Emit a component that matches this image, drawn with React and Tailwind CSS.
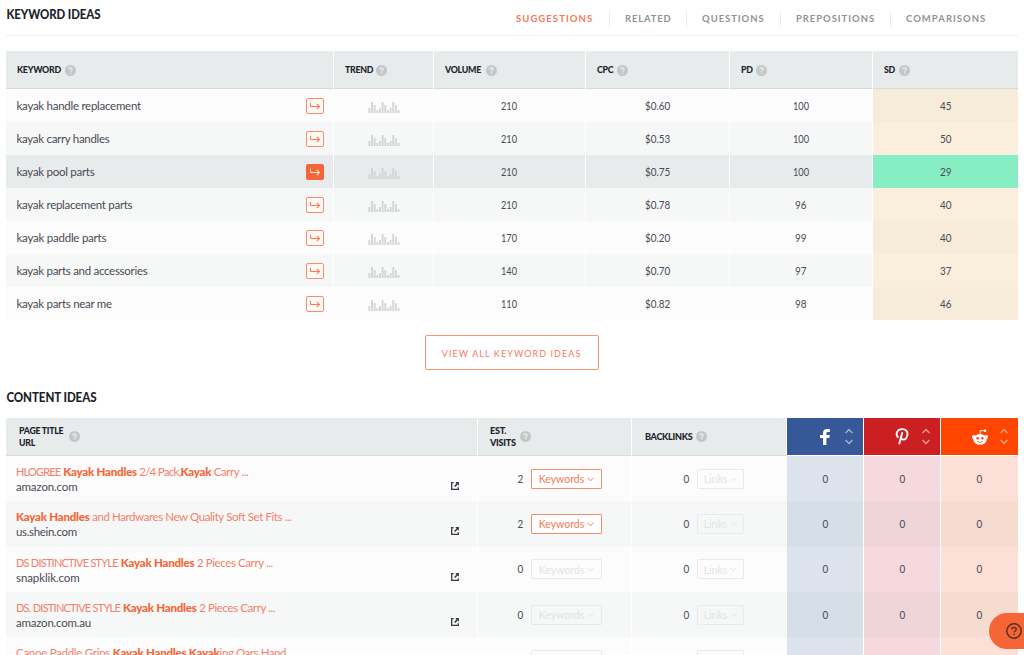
import React from "react";

const keywordRows = [
  { name: "kayak handle replacement", track: "tracking-[-0.27px]", volume: "210", cpc: "$0.60", pd: "100", sd: "45" },
  { name: "kayak carry handles", track: "tracking-[-0.3px]", volume: "210", cpc: "$0.53", pd: "100", sd: "50" },
  { name: "kayak pool parts", track: "tracking-[-0.28px]", volume: "210", cpc: "$0.75", pd: "100", sd: "29", active: true },
  { name: "kayak replacement parts", track: "tracking-[-0.29px]", volume: "210", cpc: "$0.78", pd: "96", sd: "40" },
  { name: "kayak paddle parts", track: "tracking-[-0.24px]", volume: "170", cpc: "$0.20", pd: "99", sd: "40" },
  { name: "kayak parts and accessories", track: "tracking-[-0.29px]", volume: "140", cpc: "$0.70", pd: "97", sd: "37" },
  { name: "kayak parts near me", track: "tracking-[-0.29px]", volume: "110", cpc: "$0.82", pd: "98", sd: "46" },
];

const contentRows = [
  {
    title: <><i className="text-[11px] tracking-[-0.82px]">HLOGREE</i> <b>Kayak Handles</b><i className="tracking-[-0.72px]"> 2/4 Pack,</i><b>Kayak</b><i className="tracking-[-0.45px]"> Carry ...</i></>,
    url: "amazon.com", track: "tracking-[-0.15px]", visits: "2",
  },
  {
    title: <><b>Kayak Handles</b><i className="tracking-[-0.41px]"> and Hardwares New Quality Soft Set Fits ...</i></>,
    url: "us.shein.com", track: "tracking-[-0.33px]", visits: "2",
  },
  {
    title: <><i className="text-[11px] tracking-[-0.78px]">DS DISTINCTIVE STYLE</i> <b>Kayak Handles</b><i className="tracking-[-0.4px]"> 2 Pieces Carry ...</i></>,
    url: "snapklik.com", track: "tracking-[-0.1px]", visits: "0",
  },
  {
    title: <><i className="text-[11px] tracking-[-0.76px]">DS. DISTINCTIVE STYLE</i> <b>Kayak Handles</b><i className="tracking-[-0.4px]"> 2 Pieces Carry ...</i></>,
    url: "amazon.com.au", track: "tracking-[-0.22px]", visits: "0",
  },
  {
    title: <><i className="tracking-[-0.28px]">Canoe Paddle Grips </i><b>Kayak Handles Kayak</b><i className="tracking-[-0.43px]">ing Oars Hand</i></>,
    url: "", track: "", visits: "0",
  },
];

const keywordGrid = "grid grid-cols-[327px_99px_151px_143px_142px_145px] gap-px";
const contentGrid = "grid grid-cols-[471px_153px_154px_76px_76px_77px] gap-px";

function Help({ className = "" }) {
  return (
    <svg viewBox="0 0 11 11" className={`h-[11px] w-[11px] shrink-0 ${className}`}>
      <circle cx="5.5" cy="5.5" r="5.5" fill="#c3c7c8" />
      <path d="M3.8 4.4c0-1 .7-1.6 1.7-1.6s1.7.6 1.7 1.4c0 1.1-1.5 1.1-1.5 2.2" fill="none" stroke="#eef0f0" strokeWidth="1.2" />
      <rect x="5" y="7.3" width="1.3" height="1.3" fill="#eef0f0" />
    </svg>
  );
}

function HeadCell({ label, width }) {
  return (
    <div className="flex items-center gap-1 border-b border-[#d5dadb] bg-[#e7ebec] pl-[10.5px]">
      <span className={`whitespace-nowrap ${width}`}>
        <span className="block origin-left scale-x-[0.88] pb-px text-[10px] font-black leading-3 tracking-[-0.3px] text-[#221f2b]">{label}</span>
      </span>
      <Help className="mt-[2px]" />
    </div>
  );
}

function Num({ children, shift = "pt-px" }) {
  const scale = children.length === 3 ? "scale-x-[0.8]" : "scale-x-[0.86]";
  return <span className={`inline-block text-[11.5px] leading-4 ${shift} ${scale}`}>{children}</span>;
}

function ArrowButton({ active }) {
  return (
    <svg viewBox="0 0 18 16" className="h-4 w-[18px]">
      <rect x=".5" y=".5" width="17" height="15" rx="1.5" fill={active ? "#f66535" : "#fffaf8"} stroke={active ? "#f66535" : "#f88d6b"} />
      <path d="M4.500 4.800v2.700q0 1 1 1h7.700M10.800 5.900l2.600 2.600-2.600 2.600" fill="none" stroke={active ? "#ffe3d8" : "#f67b53"} strokeWidth="1.1" />
    </svg>
  );
}

const barHeights = [5, 11, 8, 3, 5, 11, 8, 3, 5, 11, 8, 3];

function Bars() {
  return (
    <svg viewBox="0 0 32 12" className="mt-[3px] ml-px h-3 w-8">
      {barHeights.map((h, i) => (
        <rect key={i} x={0.4 + i * 2.65} y={12 - h} width="1.9" height={h} fill="#d3d6d6" />
      ))}
    </svg>
  );
}

function External() {
  return (
    <svg viewBox="0 0 8 8" className="h-2 w-2">
      <path d="M2.6.7H.7v6.6h6.6V5.3" fill="none" stroke="#3b3743" strokeWidth="1.3" />
      <path d="M4.3.1h3.6v3.6L6.7 2.5 4.2 5 3.1 3.9l2.4-2.5z" fill="#3b3743" />
    </svg>
  );
}

function Chevron({ className, thickness = "1" }) {
  return (
    <svg viewBox="0 0 7 5" className={className} fill="none" stroke="currentColor" strokeWidth={thickness}>
      <path d="M.5.8l3 3 3-3" />
    </svg>
  );
}

function DropButton({ label, enabled, size }) {
  const tone = enabled
    ? "border-[#f88d6b] bg-white text-[#f67a58]"
    : "border-[#e8ebeb] text-[#e2e5e5]";
  return (
    <button className={`flex h-5 items-center justify-center gap-[3px] rounded-[1px] border pt-px text-[10.5px] leading-none ${size} ${tone}`}>
      {label}
      <Chevron className="h-[5px] w-[7px]" />
    </button>
  );
}

function Sorter() {
  return (
    <div className="flex flex-col gap-[5px] text-white/55">
      <Chevron className="h-[6px] w-2 rotate-180" thickness="1.2" />
      <Chevron className="h-[6px] w-2" thickness="1.2" />
    </div>
  );
}

function Tab({ label, width, active, last }) {
  return (
    <div className={`flex h-4 items-center whitespace-nowrap pl-[15px] text-[9.5px] font-bold leading-none ${width} ${active ? "text-[#f47a5a]" : "text-[#909395]"} ${last ? "" : "border-r border-[#e9ecec]"}`}>
      {label}
    </div>
  );
}

function FacebookMark() {
  return (
    <svg viewBox="0 0 10 16" className="h-4 w-[10px]" fill="#fff">
      <path d="M3 16V9H0V6h3V4c0-2.700 1.600-4 4-4h2.800v2.900H8C6.700 2.900 6.400 3.500 6.400 4.400V6h3.400l-.5 3H6.400v7z" />
    </svg>
  );
}

function PinterestMark() {
  return (
    <svg viewBox="0 0 14 18" className="h-[17px] w-[14px]" fill="none" stroke="#fff" strokeWidth="2" strokeLinecap="round">
      <path d="M2.600 9.600C-.2 6.200 1.800 1.300 7.200 1.200c4.200 0 6.100 2.900 5.500 6-.5 3.100-2.300 5.100-4.500 5-1.500-.1-2.300-1-2.200-2.200" />
      <path d="M7.200 5.300L4.200 16.500" />
    </svg>
  );
}

function RedditMark() {
  return (
    <svg viewBox="0 0 16 16" className="h-4 w-4">
      <path d="M8.200 5.200V2.100q0-.5.500-.5l3.800.1" fill="none" stroke="#fff" />
      <circle cx="13" cy="1.700" r="1.300" fill="#fff" />
      <circle cx="1.900" cy="8" r="1.900" fill="#fff" />
      <circle cx="14.100" cy="8" r="1.900" fill="#fff" />
      <ellipse cx="8" cy="10.400" rx="6.600" ry="5.300" fill="#fff" />
      <circle cx="5.600" cy="9.200" r="1.200" fill="#ff4500" />
      <circle cx="10.400" cy="9.200" r="1.200" fill="#ff4500" />
      <path d="M5.300 12.500q2.700 1.700 5.400 0" fill="none" stroke="#ff4500" strokeWidth=".8" />
    </svg>
  );
}

function Social({ tone, children }) {
  return (
    <div className={`grid h-[37px] grid-cols-[1fr_auto_1fr] items-center ${tone}`}>
      <span />
      {children}
      <div className="flex justify-end pr-[10px]"><Sorter /></div>
    </div>
  );
}

export default function App() {
  return (
    <main className="relative h-[655px] w-[1024px] overflow-hidden bg-white pl-1.5 font-['Lato',sans-serif] text-[#4b4953]">
      <header className="flex h-9 w-[1012px] items-start justify-between border-b border-[#f1f2f2]">
        <h1 className="origin-left scale-x-[0.88] whitespace-nowrap pl-[0.5px] pt-[6px] text-[13px] font-black leading-4 tracking-[-0.1px] text-[#221f2b]">KEYWORD IDEAS</h1>
        <nav className="flex pt-[11px]">
          <Tab label="SUGGESTIONS" width="w-[109px] tracking-[1.07px]" active />
          <Tab label="RELATED" width="w-[77px] tracking-[0.8px]" />
          <Tab label="QUESTIONS" width="w-[94px] tracking-[0.95px]" />
          <Tab label="PREPOSITIONS" width="w-[110px] tracking-[0.94px]" />
          <Tab label="COMPARISONS" width="w-[127px] tracking-[1.02px]" last />
        </nav>
      </header>

      <section className="mt-[15px] w-[1012px]">
        <div className={`h-[38px] ${keywordGrid}`}>
          <HeadCell label="KEYWORD" width="w-[44px]" />
          <HeadCell label="TREND" width="w-[27px]" />
          <HeadCell label="VOLUME" width="w-[37px]" />
          <HeadCell label="CPC" width="w-[16px]" />
          <HeadCell label="PD" width="w-[11px]" />
          <HeadCell label="SD" width="w-[11px]" />
        </div>
        {keywordRows.map((row, i) => {
          const bg = row.active ? "bg-[#e7ebec]" : i % 2 ? "bg-[#f6f8f8]" : "bg-[#fcfcfc]";
          const sdBg = row.active ? "bg-[#87eec4]" : i % 2 ? "bg-[#faeedc]" : "bg-[#f7ebd9]";
          const cell = `flex items-center justify-center ${bg}`;
          return (
            <div key={row.name} className={`h-[33px] ${keywordGrid}`}>
              <div className={`flex items-center justify-between pl-[10.5px] pr-[9px] ${bg}`}>
                <span className={`whitespace-nowrap text-[11.5px] ${row.track}`}>{row.name}</span>
                <ArrowButton active={row.active} />
              </div>
              <div className={cell}><Bars /></div>
              <div className={cell}><Num>{row.volume}</Num></div>
              <div className={cell}><Num>{row.cpc}</Num></div>
              <div className={cell}><Num>{row.pd}</Num></div>
              <div className={`flex items-center justify-center ${sdBg}`}><Num>{row.sd}</Num></div>
            </div>
          );
        })}
      </section>

      <div className="flex w-[1012px] justify-center pt-[15px]">
        <button className="flex h-[35px] w-[174px] items-center justify-center rounded-[2px] border border-[#f79473] text-[#f47a66]">
          <span className="inline-block scale-x-[0.9] whitespace-nowrap pt-px text-[10px] tracking-[1.2px]">VIEW ALL KEYWORD IDEAS</span>
        </button>
      </div>

      <h2 className="mt-[20px] w-fit origin-left scale-x-[0.89] pl-[0.5px] text-[13px] font-black leading-[15px] tracking-[-0.1px] text-[#221f2b]">CONTENT IDEAS</h2>

      <section className="mt-[13px] w-[1012px]">
        <div className={`h-[38px] ${contentGrid} whitespace-nowrap text-[9.5px] font-black leading-3 tracking-[-0.3px] text-[#221f2b]`}>
          <div className="flex items-center gap-[6px] border-b border-[#d5dadb] bg-[#e7ebec] pl-[13px]">
            <span className="w-[44px]"><span className="block origin-left scale-x-[0.92]">PAGE TITLE<br />URL</span></span><Help />
          </div>
          <div className="flex items-center gap-1 border-b border-[#d5dadb] bg-[#e7ebec] pl-3">
            <span className="w-[26px]"><span className="block origin-left scale-x-[0.96]">EST.<br />VISITS</span></span><Help />
          </div>
          <div className="flex items-center gap-1 border-b border-[#d5dadb] bg-[#e7ebec] pl-[13px]">
            <span className="w-[47px]"><span className="block origin-left scale-x-[0.95]">BACKLINKS</span></span><Help />
          </div>
          <Social tone="bg-[#365899]"><FacebookMark /></Social>
          <Social tone="bg-[#cb1f22]"><PinterestMark /></Social>
          <Social tone="bg-[#ff4500]"><RedditMark /></Social>
        </div>
        {contentRows.map((row, i) => {
          const odd = i % 2 === 1;
          const bg = odd ? "bg-[#f6f8f8]" : "bg-[#fcfcfc]";
          return (
            <div key={i} className={`h-[45.33px] ${contentGrid}`}>
              <div className={`flex items-start justify-between pl-2.5 pr-[18px] pt-2 ${bg}`}>
                <div className="whitespace-nowrap text-[11.5px] leading-[15px]">
                  <div className="h-[15px] whitespace-pre text-[#f3806a] [&_b]:font-black [&_b]:tracking-[-0.22px] [&_b]:text-[#f66535] [&_i]:not-italic">{row.title}</div>
                  <div className={row.track}>{row.url}</div>
                </div>
                <div className="pt-[18px]"><External /></div>
              </div>
              <div className={`flex items-center pl-[39px] ${bg}`}>
                <span className="flex w-[14px]"><Num shift="pt-0">{row.visits}</Num></span>
                <DropButton label="Keywords" enabled={row.visits === "2"} size="w-[71px]" />
              </div>
              <div className={`flex items-center pl-[51px] ${bg}`}>
                <span className="flex w-[14px]"><Num shift="pt-0">0</Num></span>
                <DropButton label="Links" size="w-[47px]" />
              </div>
              <div className={`flex items-center justify-center ${odd ? "bg-[#d6dee8]" : "bg-[#dce3ed]"}`}><Num shift="pt-0">0</Num></div>
              <div className={`flex items-center justify-center ${odd ? "bg-[#f0d5d8]" : "bg-[#f5d9dd]"}`}><Num shift="pt-0">0</Num></div>
              <div className={`flex items-center justify-center ${odd ? "bg-[#f6dbd0]" : "bg-[#fce0d8]"}`}><Num shift="pt-0">0</Num></div>
            </div>
          );
        })}
      </section>

      <button className="absolute left-[989px] top-[613px] flex h-9 w-[54px] items-center rounded-full bg-[#f66535] pl-[17px]">
        <svg viewBox="0 0 16 16" className="h-4 w-4" fill="none" stroke="#582d24">
          <circle cx="8" cy="8" r="7.200" strokeWidth="1.500" />
          <path d="M5.800 6.500c0-1.300.9-2.100 2.200-2.100s2.300.8 2.300 1.900c0 1.500-2.200 1.500-2.200 3.200" strokeWidth="1.400" />
          <path d="M8.100 10.700v1.400" strokeWidth="1.400" />
        </svg>
      </button>
    </main>
  );
}
